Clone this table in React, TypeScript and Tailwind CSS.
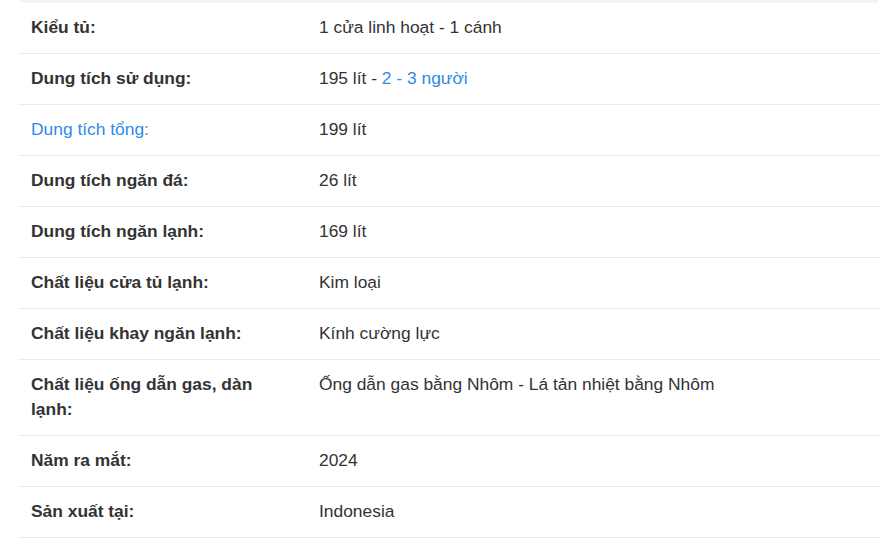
const rows: { label: React.ReactNode; value: React.ReactNode }[] = [
  { label: "Kiểu tủ:", value: "1 cửa linh hoạt - 1 cánh" },
  {
    label: "Dung tích sử dụng:",
    value: (
      <>
        195 lít - <span className="text-[#2f8ae8]">2 - 3 người</span>
      </>
    ),
  },
  { label: <span className="font-normal text-[#2f8ae8]">Dung tích tổng:</span>, value: "199 lít" },
  { label: "Dung tích ngăn đá:", value: "26 lít" },
  { label: "Dung tích ngăn lạnh:", value: "169 lít" },
  { label: "Chất liệu cửa tủ lạnh:", value: "Kim loại" },
  { label: "Chất liệu khay ngăn lạnh:", value: "Kính cường lực" },
  { label: "Chất liệu ống dẫn gas, dàn lạnh:", value: "Ống dẫn gas bằng Nhôm - Lá tản nhiệt bằng Nhôm" },
  { label: "Năm ra mắt:", value: "2024" },
  { label: "Sản xuất tại:", value: "Indonesia" },
];

export default function App() {
  return (
    <div className="min-h-screen bg-white font-['Liberation_Sans',Arial,sans-serif] text-[17.4px] text-[#333]">
      <div className="mx-[20px] h-[3px] w-[858px] rounded-b-md bg-[#f2f3f6]" />
      <div className="ml-[18px] w-[863px]">
        {rows.map((row, i) => (
          <div key={i} className="flex border-b border-[#eaeaea] leading-[25px]">
            <div className="w-[288px] shrink-0 px-[13px] pt-[12px] pb-[13px] font-bold">{row.label}</div>
            <div className="flex-1 px-[13px] pt-[12px] pb-[13px]">{row.value}</div>
          </div>
        ))}
      </div>
    </div>
  );
}
